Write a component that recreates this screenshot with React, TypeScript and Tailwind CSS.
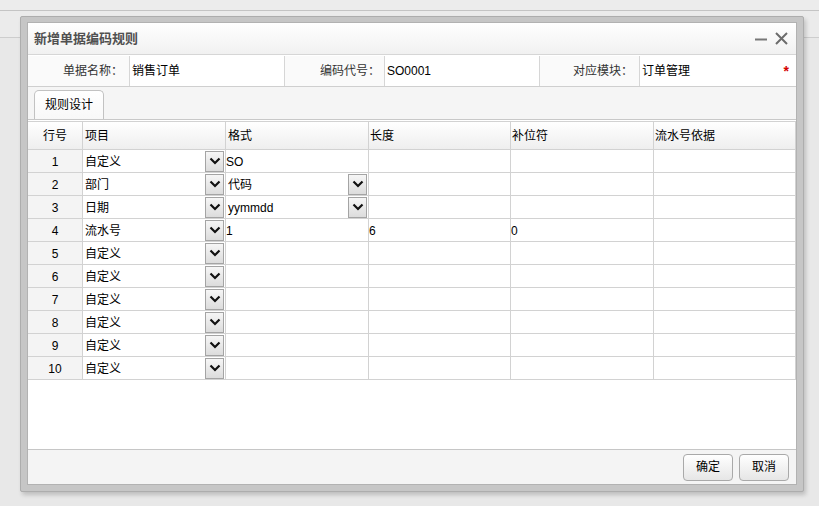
import React from "react";

const FONT = { fontFamily: "'Liberation Sans', 'Noto Sans CJK SC', sans-serif" };

const COLS = "grid grid-cols-[55px_143px_143px_142px_143px_142px]";

function Chevron() {
  return (
    <svg width="12" height="8" viewBox="0 0 12 8">
      <path d="M1.5 1.5 L6 6 L10.5 1.5" fill="none" stroke="#111" strokeWidth="2.2" />
    </svg>
  );
}

function DropBtn() {
  return (
    <div className="w-[19px] h-[21px] shrink-0 border border-[#a4a4a4] bg-gradient-to-b from-[#f6f6f6] to-[#dcdcdc] flex items-center justify-center">
      <Chevron />
    </div>
  );
}

type Row = { item: string; fmt?: string; fmtSelect?: boolean; len?: string; pad?: string };

const rows: Row[] = [
  { item: "自定义", fmt: "SO" },
  { item: "部门", fmt: "代码", fmtSelect: true },
  { item: "日期", fmt: "yymmdd", fmtSelect: true },
  { item: "流水号", fmt: "1", len: "6", pad: "0" },
  { item: "自定义" },
  { item: "自定义" },
  { item: "自定义" },
  { item: "自定义" },
  { item: "自定义" },
  { item: "自定义" },
];

const cell = "border-r border-b border-[#d2d2d2] h-[23px] flex items-center text-[12px] text-black";

export default function App() {
  return (
    <div className="relative w-[819px] h-[506px] bg-[#e8e8e8] overflow-hidden" style={FONT}>
      {/* background page header */}
      <div className="h-[11px] bg-[#ececec] border-b border-[#c4c4c4]" />
      <div className="h-[27px] bg-[#ebebeb] border-b border-[#cdcdcd]" />

      {/* dialog */}
      <div className="absolute left-[20px] top-[16px] w-[784px] h-[476px] bg-[#c6c6c6] border border-[#adadad] rounded-[2px] shadow-[2px_3px_4px_rgba(0,0,0,0.18)] pt-[5px] px-[6px] pb-[6px]">
        <div className="w-full h-full bg-white border border-[#b2b2b2] flex flex-col">
          {/* title bar */}
          <div className="h-[32px] shrink-0 flex items-center justify-between pl-[6px] pr-[8px] bg-gradient-to-b from-white to-[#f1f1f1] border-b border-[#d6d6d6]">
            <span className="text-[13px] font-bold text-[#505050] leading-none">新增单据编码规则</span>
            <div className="flex items-center gap-[8px]">
              <svg width="12" height="12" viewBox="0 0 12 12">
                <path d="M0 6.5 H12" stroke="#777" strokeWidth="2" />
              </svg>
              <svg width="13" height="13" viewBox="0 0 13 13">
                <path d="M1 1 L12 12 M12 1 L1 12" stroke="#6c6c6c" strokeWidth="2" />
              </svg>
            </div>
          </div>

          {/* form row */}
          <div className="h-[32px] shrink-0 grid grid-cols-[102px_155px_100px_155px_100px_156px] border-b border-[#cfcfcf] text-[12px] pt-[1px]">
            <div className="border-r border-[#d6d6d6] bg-[#fafafa] flex items-center justify-end pr-[6px] text-[#333]">单据名称：</div>
            <div className="border-r border-[#d6d6d6] flex items-center pl-[2px] text-black">销售订单</div>
            <div className="border-r border-[#d6d6d6] bg-[#fafafa] flex items-center justify-end pr-[4px] text-[#333]">编码代号：</div>
            <div className="border-r border-[#d6d6d6] flex items-center pl-[2px] text-black">SO0001</div>
            <div className="border-r border-[#d6d6d6] bg-[#fafafa] flex items-center justify-end pr-[6px] text-[#333]">对应模块：</div>
            <div className="flex items-center justify-between pl-[2px] pr-[7px] text-black">
              <span>订单管理</span>
              <span className="text-[#d40000] text-[14px] font-bold">*</span>
            </div>
          </div>

          {/* tab strip */}
          <div className="h-[33px] shrink-0 bg-[#f5f5f5] border-b border-[#c8c8c8] flex items-end pl-[6px]">
            <div className="h-[29px] px-[10px] border border-b-0 border-[#c2c2c2] rounded-t-[5px] bg-gradient-to-b from-white to-[#f8f8f8] flex items-center text-[12px] text-black">
              规则设计
            </div>
          </div>

          {/* table */}
          <div className="flex-1 bg-white pt-[1px] flex flex-col">
            <div className={`${COLS} h-[29px] bg-gradient-to-b from-white to-[#eeeeee] border-t border-[#d2d2d2]`}>
              <div className="border-r border-b border-[#d2d2d2] flex items-center justify-center text-[12px] pt-[1px]">行号</div>
              <div className="border-r border-b border-[#d2d2d2] flex items-center pl-[2px] text-[12px] pt-[1px]">项目</div>
              <div className="border-r border-b border-[#d2d2d2] flex items-center pl-[2px] text-[12px] pt-[1px]">格式</div>
              <div className="border-r border-b border-[#d2d2d2] flex items-center pl-[1px] text-[12px] pt-[1px]">长度</div>
              <div className="border-r border-b border-[#d2d2d2] flex items-center pl-[1px] text-[12px] pt-[1px]">补位符</div>
              <div className="border-r border-b border-[#d2d2d2] flex items-center pl-[1px] text-[12px] pt-[1px]">流水号依据</div>
            </div>
            {rows.map((r, i) => (
              <div key={i} className={COLS}>
                <div className={`${cell} justify-center bg-[#f4f4f4] pt-[1px]`}>{i + 1}</div>
                <div className={`${cell} justify-between pl-[2px] pr-[1px]`}>
                  <span className="pt-[1px]">{r.item}</span>
                  <DropBtn />
                </div>
                {r.fmtSelect ? (
                  <div className={`${cell} justify-between pl-[2px] pr-[1px]`}>
                    <span className="pt-[1px]">{r.fmt}</span>
                    <DropBtn />
                  </div>
                ) : (
                  <div className={`${cell} pt-[1px]`}>{r.fmt ?? ""}</div>
                )}
                <div className={`${cell} pt-[1px]`}>{r.len ?? ""}</div>
                <div className={`${cell} pt-[1px]`}>{r.pad ?? ""}</div>
                <div className={cell}></div>
              </div>
            ))}
            <div className="flex-1" />
          </div>

          {/* footer */}
          <div className="h-[35px] shrink-0 bg-[#f4f4f4] border-t border-[#c6c6c6] flex items-center justify-end gap-[6px] pr-[7px]">
            <button className="w-[50px] h-[27px] rounded-[4px] border border-[#a9a9a9] bg-gradient-to-b from-white to-[#e6e6e6] text-[12px] text-black">确定</button>
            <button className="w-[50px] h-[27px] rounded-[4px] border border-[#a9a9a9] bg-gradient-to-b from-white to-[#e6e6e6] text-[12px] text-black">取消</button>
          </div>
        </div>
      </div>
    </div>
  );
}
